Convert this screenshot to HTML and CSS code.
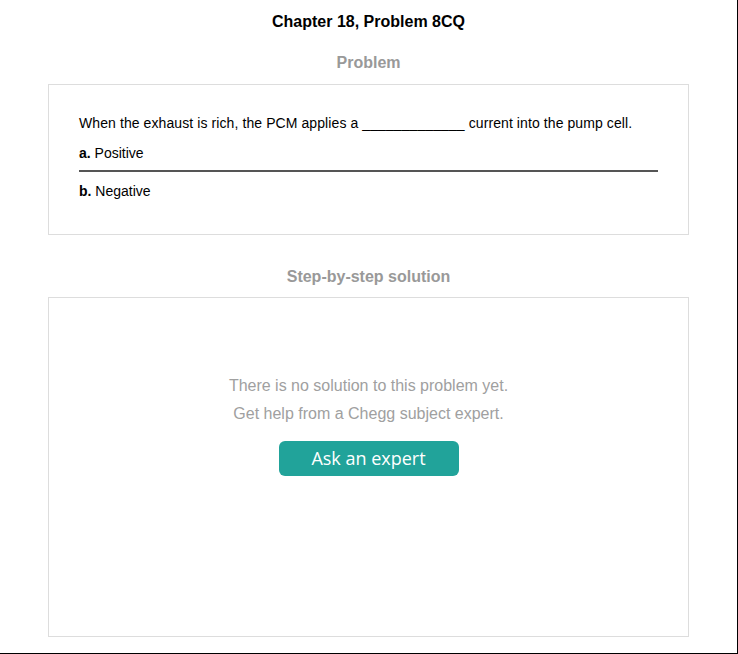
FILE: index.html
```html
<!DOCTYPE html>
<html>
<head>
<meta charset="utf-8">
<link rel="stylesheet" href="styles.css">
</head>
<body>
<div class="frame">
  <h1 class="title">Chapter 18, Problem 8CQ</h1>
  <h2 class="section-title">Problem</h2>
  <div class="card problem">
    <p class="question">When the exhaust is rich, the PCM applies a _____________ current into the pump cell.</p>
    <p class="option"><b>a.</b> Positive</p>
    <hr class="divider">
    <p class="option"><b>b.</b> Negative</p>
  </div>
  <h2 class="section-title step">Step-by-step solution</h2>
  <div class="card solution">
    <p class="msg">There is no solution to this problem yet.</p>
    <p class="msg">Get help from a Chegg subject expert.</p>
    <button class="ask">Ask an expert</button>
  </div>
</div>
</body>
</html>
```
FILE: styles.css
```css
html, body {
  margin: 0;
  padding: 0;
  background: #fff;
}
.frame {
  box-sizing: border-box;
  width: 738px;
  height: 654px;
  border-right: 1px solid #000;
  border-bottom: 1px solid #000;
  padding: 0 48px 0 48px;
  font-family: "Liberation Sans", Arial, sans-serif;
  display: flex;
  flex-direction: column;
  align-items: stretch;
}
.title {
  margin: 13px 0 0;
  font-size: 16px;
  line-height: 18px;
  font-weight: bold;
  color: #000;
  text-align: center;
}
.section-title {
  margin: 23px 0 0;
  font-size: 16px;
  line-height: 18px;
  font-weight: bold;
  color: #999;
  text-align: center;
}
.section-title.step {
  margin-top: 33px;
}
.card {
  border: 1px solid #ddd;
  background: #fff;
}
.problem {
  margin-top: 12px;
  padding: 29px 30px 26px 30px;
  height: 151px;
  box-sizing: border-box;
}
.question {
  margin: 0;
  font-size: 14px;
  line-height: 18px;
  letter-spacing: 0.09px;
  color: #000;
}
.option {
  margin: 12px 0 0;
  font-size: 14px;
  line-height: 18px;
  color: #000;
}
.divider {
  margin: 8px 0 0;
  border: 0;
  height: 2px;
  background: #555;
}
.divider + .option {
  margin-top: 10px;
}
.solution {
  margin-top: 11px;
  height: 340px;
  box-sizing: border-box;
  display: flex;
  flex-direction: column;
  align-items: center;
  padding-top: 79px;
}
.msg {
  margin: 0 0 10px;
  font-size: 16px;
  line-height: 18px;
  color: #a0a0a0;
}
.ask {
  margin-top: 8px;
  width: 180px;
  height: 35px;
  border: 0;
  border-radius: 6px;
  background: #21a39a;
  color: #fff;
  font-family: "Open Sans", "Noto Sans", sans-serif;
  font-size: 18px;
  line-height: 35px;
  padding: 0;
}
```
